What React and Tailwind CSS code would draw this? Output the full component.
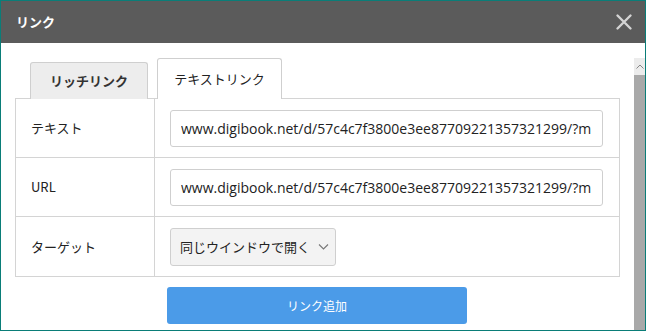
import React from "react";

const jp = { fontFamily: '"Noto Sans CJK JP", "Noto Sans", sans-serif' };
const URL_TEXT = "www.digibook.net/d/57c4c7f3800e3ee87709221357321299/?mode=preview";

function Row({ label, children, last }) {
  return (
    <div className={`flex h-[59px] ${last ? "" : "border-b border-[#d4d4d4]"}`}>
      <div className="w-[139px] shrink-0 border-r border-[#d4d4d4] flex items-center pl-[15px] text-[13px] text-[#222]">
        {label}
      </div>
      <div className="flex-1 flex items-center pl-[15px] pr-[16px]">{children}</div>
    </div>
  );
}

function TextInput() {
  return (
    <div className="w-full h-[37px] border border-[#cfcfcf] rounded-[3px] bg-white flex items-center pl-[10px] pr-[10px] overflow-hidden">
      <span
        className="whitespace-nowrap text-[14px] text-[#222] overflow-hidden"
        style={{ fontFamily: '"Open Sans", "Noto Sans CJK JP", sans-serif' }}
      >
        {URL_TEXT.slice(0, 54)}
      </span>
    </div>
  );
}

export default function App() {
  return (
    <div className="w-[646px] h-[331px] border border-[#0a7d78] bg-white flex flex-col overflow-hidden" style={jp}>
      <div className="h-[42px] shrink-0 bg-[#5b5b5b] flex items-center justify-between pl-[15px] pr-[12px]">
        <span className="text-white text-[13px] font-bold">リンク</span>
        <svg width="18" height="18" viewBox="0 0 18 18">
          <path d="M2.5 2.5 L15.5 15.5 M15.5 2.5 L2.5 15.5" stroke="#d4d4d4" strokeWidth="2.4" strokeLinecap="round" />
        </svg>
      </div>
      <div className="flex-1 flex">
        <div className="flex-1 pl-[14px] pr-[14px] pt-[15px]">
          <div className="flex items-end gap-[9px] pl-[15px] relative z-10 -mb-px">
            <div className="w-[118px] h-[37px] bg-[#ededed] border border-[#cfcfcf] border-b-0 rounded-t-[3px] flex items-center justify-center text-[13px] font-bold text-[#333]">
              リッチリンク
            </div>
            <div className="w-[125px] h-[41px] bg-white border border-[#cfcfcf] border-b-0 rounded-t-[3px] flex items-center justify-center text-[13px] text-[#222]">
              テキストリンク
            </div>
          </div>
          <div className="border border-[#d4d4d4]">
            <Row label="テキスト"><TextInput /></Row>
            <Row label="URL"><TextInput /></Row>
            <Row label="ターゲット" last>
              <div className="h-[38px] w-[166px] border border-[#cfcfcf] rounded-[3px] bg-[#f3f3f3] flex items-center pl-[9px] gap-[8px] text-[13px] text-[#222] whitespace-nowrap">
                <span>同じウインドウで開く</span>
                <svg width="11" height="7" viewBox="0 0 11 7">
                  <path d="M1 1.5 L5.5 6 L10 1.5" stroke="#777" strokeWidth="1.1" fill="none" />
                </svg>
              </div>
            </Row>
          </div>
          <div className="pt-[10px] pl-[152px]">
            <div className="w-[300px] h-[37px] bg-[#4b9be8] rounded-[3px] flex items-center justify-center text-white text-[12px]">
              リンク追加
            </div>
          </div>
        </div>
        <div className="w-[11px] shrink-0 mt-[15px] flex flex-col">
          <div className="h-[17px] bg-[#ececec] flex items-center justify-center">
            <svg width="8" height="5" viewBox="0 0 8 5">
              <path d="M0.5 4.5 L4 1 L7.5 4.5" stroke="#888" strokeWidth="1" fill="none" />
            </svg>
          </div>
          <div className="flex-1 bg-[#a9a9a9]" />
        </div>
      </div>
    </div>
  );
}
